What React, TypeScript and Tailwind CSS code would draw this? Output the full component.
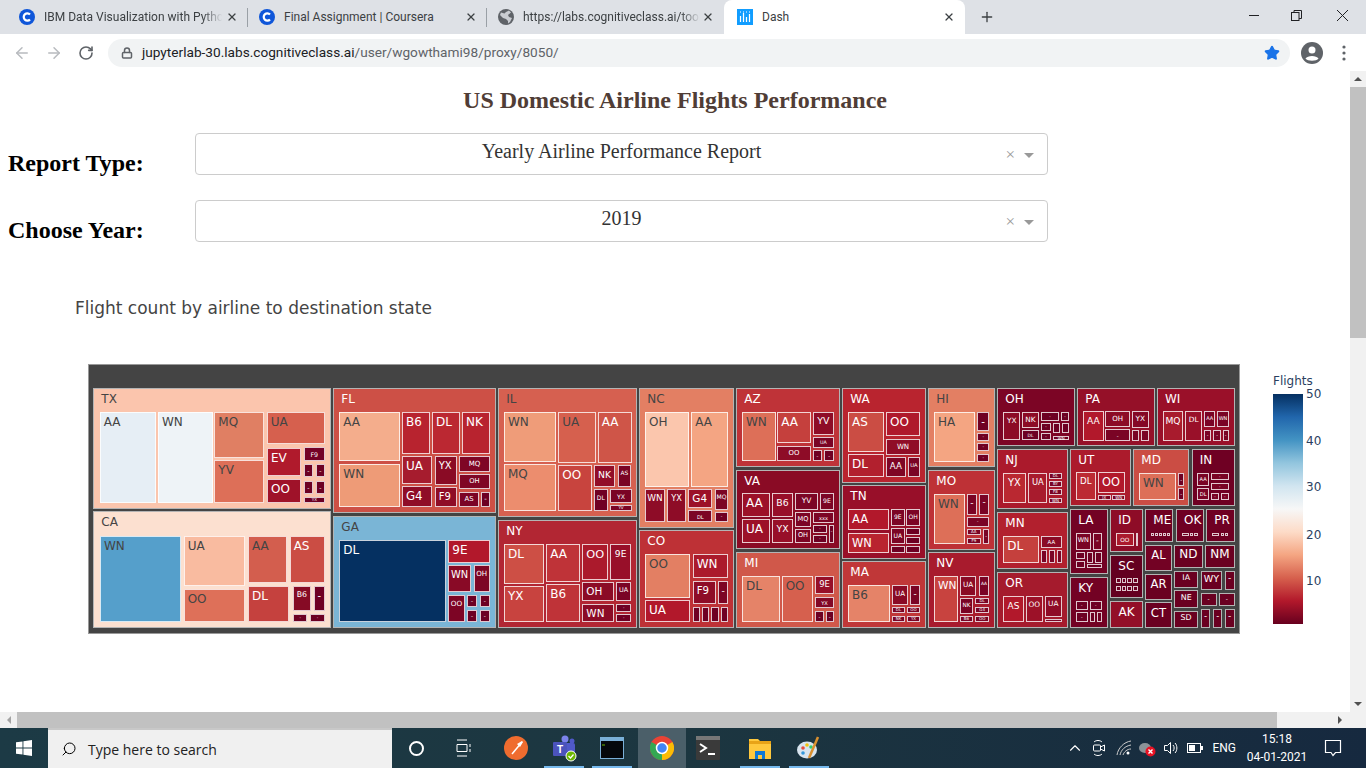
import React from "react";
import { ArrowLeft, ArrowRight, RotateCw, Lock, X, Plus, Star, ChevronUp, Search } from "lucide-react";

type N = [string, number, number, number, number, string, N[]?];
type G = { ox: number; oy: number; nodes: N[] };
const T = "#6d0023";
const M = "#7a0425";

const groups: G[] = [
  {
    ox: 85,
    oy: 360,
    nodes: [
      ["TX", 25, 84, 738, 446, "#fbc5ad", [
        ["AA", 44, 155, 213, 428, "#e6eef5"], ["WN", 219, 155, 383, 428, "#eef3f7"],
        ["MQ", 388, 155, 538, 293, "#e07f63"], ["YV", 388, 301, 538, 428, "#dd6f58"],
        ["UA", 545, 155, 719, 253, "#d6604e"], ["EV", 546, 263, 649, 349, "#b01a2c"],
        ["OO", 546, 356, 649, 428, "#9f1229"], ["F9", 656, 262, 720, 304, "#740227"],
        ["-", 656, 311, 684, 352, T], ["-", 692, 311, 720, 352, T], ["-", 656, 362, 684, 402, T],
        ["-", 692, 362, 720, 402, T], ["YX", 656, 410, 720, 428, T],
      ]],
      ["CA", 25, 453, 738, 805, "#fce0d0", [
        ["WN", 45, 527, 287, 786, "#559fcb"], ["UA", 296, 527, 481, 678, "#f9bba0"],
        ["OO", 296, 687, 481, 786, "#de7059"], ["AA", 489, 527, 606, 669, "#d35e4e"],
        ["AS", 614, 527, 719, 669, "#cb4d44"], ["DL", 489, 679, 613, 786, "#c5413e"],
        ["B6", 624, 679, 677, 752, "#860b25"], ["-", 686, 679, 719, 752, "#6f0023"],
        ["-", 624, 762, 667, 786, T], ["-", 676, 762, 719, 786, T],
      ]],
      ["FL", 745, 84, 1232, 460, "#cd5046", [
        ["AA", 763, 155, 945, 304, "#f4ad8c"], ["WN", 763, 312, 945, 442, "#ee9b77"],
        ["B6", 951, 155, 1034, 282, "#b8232f"], ["DL", 1041, 155, 1124, 282, "#bb2832"],
        ["NK", 1131, 155, 1214, 282, "#b8232f"], ["UA", 951, 289, 1041, 372, "#a61c2e"],
        ["YX", 1049, 289, 1117, 374, "#8a0b25"], ["MQ", 1123, 289, 1214, 336, "#7f0625"],
        ["OH", 1123, 343, 1214, 388, "#7f0625"], ["G4", 951, 379, 1041, 442, "#8f0d27"],
        ["F9", 1049, 381, 1117, 442, "#8f0d27"], ["AS", 1123, 396, 1181, 442, "#7b0426"],
        ["-", 1189, 396, 1214, 442, T],
      ]],
      ["GA", 745, 468, 1232, 805, "#7ab5d6", [
        ["DL", 763, 540, 1083, 787, "#053061"], ["9E", 1090, 540, 1214, 608, "#b2182b"],
        ["WN", 1090, 616, 1157, 697, "#890a26"], ["OH", 1166, 616, 1214, 697, "#7d0525"],
        ["OO", 1090, 705, 1139, 787, "#7d0525"], ["-", 1147, 705, 1175, 742, T],
        ["-", 1184, 705, 1214, 742, T], ["-", 1147, 750, 1175, 787, T], ["-", 1184, 750, 1214, 787, T],
      ]],
    ],
  },
  {
    ox: 495,
    oy: 380,
    nodes: [
      ["IL", 10, 24, 427, 410, "#d66050", [
        ["WN", 27, 95, 184, 246, "#ef9c79"], ["UA", 190, 95, 302, 248, "#d6604e"],
        ["AA", 308, 95, 410, 248, "#cf5548"], ["MQ", 27, 253, 184, 394, "#ec8d6e"],
        ["OO", 190, 256, 290, 394, "#c8443e"], ["NK", 297, 256, 360, 321, "#920e28"],
        ["AS", 368, 256, 408, 321, M], ["DL", 297, 328, 338, 394, "#6f0023"],
        ["YX", 346, 328, 410, 369, M], ["YV", 346, 376, 410, 394, M],
      ]],
      ["NY", 10, 421, 427, 744, "#b22633", [
        ["DL", 27, 491, 148, 611, "#cd4f45"], ["AA", 154, 491, 255, 605, "#bf3338"],
        ["YX", 27, 619, 148, 727, "#c8433f"], ["B6", 154, 613, 255, 727, "#bf3338"],
        ["OO", 262, 491, 339, 600, "#ab1a2c"], ["9E", 346, 491, 408, 600, "#980f29"],
        ["OH", 262, 607, 357, 663, "#8b0b26"], ["UA", 364, 607, 408, 663, M],
        ["WN", 262, 671, 357, 727, "#8b0b26"], ["-", 364, 671, 408, 695, "#6f0023"],
        ["-", 364, 703, 408, 727, "#6f0023"],
      ]],
      ["NC", 433, 24, 717, 443, "#e37f63", [
        ["OH", 450, 95, 583, 320, "#fbc6ad"], ["AA", 589, 95, 700, 320, "#f4a583"],
        ["WN", 450, 327, 510, 425, "#8e0c27"], ["YX", 517, 327, 573, 425, "#8e0c27"],
        ["G4", 580, 327, 652, 383, "#9c1128"], ["MQ", 659, 327, 700, 389, "#7c0525"],
        ["DL", 580, 391, 652, 425, "#7c0525"], ["-", 659, 396, 700, 425, "#6f0023"],
      ]],
      ["CO", 433, 451, 717, 744, "#be3136", [
        ["OO", 450, 523, 586, 653, "#e37f63"], ["WN", 593, 523, 700, 595, "#ab1a2c"],
        ["UA", 450, 661, 586, 727, "#b2182b"], ["F9", 593, 603, 662, 673, "#8e0c27"],
        ["-", 669, 603, 700, 673, "#7c0525"], ["", 593, 681, 615, 727, "#6f0023"],
        ["", 622, 681, 643, 727, "#6f0023"], ["", 649, 681, 672, 727, "#6f0023"],
        ["", 677, 681, 700, 727, "#6f0023"],
      ]],
      ["AZ", 724, 24, 1034, 262, "#bf3338", [
        ["WN", 741, 95, 842, 244, "#dd6f58"], ["AA", 847, 95, 947, 190, "#c5403d"],
        ["YV", 953, 95, 1017, 166, "#8e0c27"], ["OO", 847, 198, 947, 244, "#8e0c27"],
        ["UA", 953, 172, 1017, 204, M], ["-", 953, 210, 981, 244, "#6f0023"],
        ["-", 988, 210, 1017, 244, "#6f0023"],
      ]],
      ["VA", 724, 270, 1034, 507, "#8a0b25", [
        ["AA", 741, 340, 826, 412, "#9c1128"], ["B6", 831, 340, 894, 412, "#980f29"],
        ["UA", 741, 418, 826, 490, "#9c1128"], ["YX", 831, 418, 894, 490, "#980f29"],
        ["YV", 900, 340, 969, 390, "#7c0525"], ["9E", 975, 340, 1017, 390, "#7c0525"],
        ["MQ", 900, 396, 948, 440, "#7c0525"], ["xxx", 954, 396, 1017, 430, "#7c0525"],
        ["OH", 900, 446, 948, 490, "#7c0525"], ["-", 954, 436, 996, 460, T],
        ["-", 954, 466, 996, 490, T], ["-", 1002, 436, 1017, 490, T],
      ]],
      ["MI", 724, 516, 1034, 744, "#d0584a", [
        ["DL", 741, 587, 855, 727, "#e58368"], ["OO", 860, 587, 954, 727, "#d6604e"],
        ["9E", 960, 587, 1017, 642, "#960f28"], ["YX", 960, 650, 1017, 684, "#820826"],
        ["-", 960, 692, 986, 727, T], ["-", 992, 692, 1017, 727, T],
      ]],
    ],
  },
  {
    ox: 840,
    oy: 380,
    nodes: [
      ["WA", 7, 24, 257, 308, "#b9242f", [
        ["AS", 24, 95, 132, 215, "#cb4d44"], ["OO", 138, 95, 240, 169, "#af192c"],
        ["WN", 138, 177, 240, 224, "#900d27"], ["DL", 24, 223, 132, 291, "#b2202e"],
        ["AA", 138, 232, 197, 291, "#7f0625"], ["UA", 204, 232, 240, 291, M],
      ]],
      ["TN", 7, 316, 257, 536, "#980f29", [
        ["AA", 24, 388, 146, 450, "#b2182b"], ["WN", 24, 458, 146, 519, "#b9242f"],
        ["9E", 153, 388, 194, 437, "#7c0525"], ["OH", 199, 388, 240, 437, "#7c0525"],
        ["UA", 153, 444, 194, 491, "#7c0525"], ["", 199, 444, 240, 465, T],
        ["", 199, 471, 240, 491, T], ["", 153, 498, 194, 519, T], ["", 199, 498, 240, 519, T],
      ]],
      ["MA", 7, 544, 257, 744, "#c03738", [
        ["B6", 24, 616, 150, 727, "#e58368"], ["UA", 156, 616, 204, 674, "#890a26"],
        ["-", 210, 616, 240, 674, M], ["DL", 156, 682, 195, 700, M], ["OO", 201, 682, 240, 700, M],
        ["NK", 156, 708, 195, 727, M], ["YX", 201, 708, 240, 727, M],
      ]],
      ["HI", 265, 24, 465, 262, "#e37f63", [
        ["HA", 282, 95, 406, 245, "#f4a582"], ["-", 412, 95, 447, 152, "#6f0023"],
        ["-", 412, 158, 447, 182, "#6f0023"], ["-", 412, 190, 447, 214, "#6f0023"],
        ["-", 412, 222, 447, 245, "#6f0023"],
      ]],
      ["MO", 265, 270, 465, 509, "#be3136", [
        ["WN", 282, 342, 374, 491, "#dd6f58"], ["-", 380, 342, 411, 404, M],
        ["-", 417, 342, 447, 404, M], ["-", 380, 412, 447, 440, M], ["AA", 380, 447, 423, 466, M],
        ["F9", 380, 473, 423, 491, M], ["-", 430, 447, 447, 491, M],
      ]],
      ["NV", 265, 517, 465, 744, "#a81b2d", [
        ["WN", 282, 589, 354, 727, "#c8433f"], ["UA", 360, 589, 409, 647, "#8a0b25"],
        ["AA", 417, 589, 447, 647, M], ["NK", 360, 655, 399, 702, M], ["DL", 406, 655, 447, 673, M],
        ["G4", 406, 682, 447, 700, M], ["B6", 360, 708, 399, 727, M], ["OO", 406, 708, 447, 727, M],
      ]],
      ["OH", 472, 24, 704, 198, "#7c0525", [
        ["YX", 490, 95, 540, 181, "#8c0b26"], ["NK", 546, 95, 597, 144, "#8c0b26"],
        ["-", 603, 95, 657, 122, T], ["-", 663, 95, 687, 122, T], ["DL", 546, 151, 597, 181, T],
        ["-", 603, 130, 633, 153, T], ["", 640, 130, 660, 160, T], ["", 667, 130, 687, 160, T],
        ["-", 603, 160, 633, 181, T], ["WN", 640, 168, 687, 181, T],
      ]],
      ["NJ", 472, 207, 683, 388, "#ab1a2c", [
        ["YX", 490, 279, 557, 370, "#ba2831"], ["UA", 565, 279, 622, 370, "#a81b2d"],
        ["DL", 628, 279, 665, 296, M], ["BY", 628, 303, 665, 321, M], ["F8", 628, 328, 665, 346, M],
        ["WN", 628, 353, 665, 370, M],
      ]],
      ["MN", 472, 397, 683, 566, "#b2202e", [
        ["DL", 490, 468, 597, 548, "#c5403d"], ["AA", 603, 468, 665, 504, "#8a0b25"],
        ["", 603, 511, 622, 548, M], ["", 628, 511, 644, 548, M], ["", 650, 511, 665, 548, M],
      ]],
      ["OR", 472, 575, 683, 744, "#a51b2d", [
        ["AS", 490, 647, 551, 727, "#b2182b"], ["OO", 558, 647, 608, 727, "#9c1128"],
        ["UA", 615, 647, 665, 710, "#8e0c27"], ["", 615, 717, 665, 727, M],
      ]],
    ],
  },
  {
    ox: 1065,
    oy: 370,
    nodes: [
      ["PA", 37, 54, 269, 229, "#951028", [
        ["AA", 54, 124, 116, 212, "#b2182b"], ["OH", 121, 124, 195, 171, "#8c0b26"],
        ["YX", 201, 124, 251, 175, "#850826"], ["-", 121, 178, 195, 212, M],
        ["", 201, 180, 222, 212, M], ["", 229, 180, 251, 212, M],
      ]],
      ["WI", 276, 54, 509, 229, "#9a1029", [
        ["MQ", 293, 124, 355, 212, "#a81b2d"], ["DL", 361, 124, 411, 212, "#991029"],
        ["AA", 417, 124, 451, 170, M], ["WN", 457, 124, 491, 170, M], ["-", 417, 180, 438, 212, M],
        ["-", 445, 180, 468, 212, M], ["-", 473, 180, 491, 212, M],
      ]],
      ["UT", 16, 238, 197, 409, "#ac1b2c", [
        ["DL", 33, 307, 92, 391, "#bc2a33"], ["OO", 99, 307, 180, 368, "#b2182b"],
        ["JX", 99, 375, 137, 391, M], ["WN", 142, 375, 180, 391, M],
      ]],
      ["MD", 205, 238, 372, 409, "#cb4d44", [
        ["WN", 222, 309, 333, 391, "#dd6f58"], ["-", 340, 309, 358, 347, T], ["-", 340, 353, 358, 391, T],
      ]],
      ["IN", 380, 238, 509, 409, "#6f0023", [
        ["AA", 397, 308, 432, 347, M], ["-", 438, 308, 491, 331, M], ["-", 438, 338, 491, 361, M],
        ["DL", 397, 353, 432, 391, M], ["-", 438, 368, 462, 391, M], ["-", 468, 368, 491, 391, M],
      ]],
      ["LA", 16, 418, 128, 612, "#730224", [
        ["WN", 33, 489, 77, 540, "#7a0425"], ["-", 84, 489, 110, 540, "#7a0425"],
        ["", 33, 546, 60, 566, T], ["", 33, 573, 60, 595, T], ["", 67, 546, 84, 578, T],
        ["", 90, 546, 110, 578, T], ["", 67, 583, 110, 595, T],
      ]],
      ["ID", 136, 418, 234, 545, "#8e0c27", [
        ["OO", 153, 489, 206, 528, "#ab1a2c"], ["", 212, 489, 217, 528, "#7a0425"],
      ]],
      ["ME", 241, 418, 325, 515, "#6f0023", [
        ["", 258, 488, 267, 497, T], ["", 270, 488, 279, 497, T], ["", 282, 488, 291, 497, T],
        ["", 294, 488, 303, 497, T], ["", 306, 488, 316, 497, T],
      ]],
      ["OK", 333, 418, 416, 515, "#6f0023", [
        ["", 350, 488, 372, 497, T], ["", 376, 488, 385, 497, T], ["", 388, 488, 398, 497, T],
      ]],
      ["PR", 424, 418, 509, 515, "#6f0023", [
        ["", 441, 488, 463, 497, T], ["", 467, 488, 476, 497, T], ["", 479, 488, 490, 497, T],
      ]],
      ["SC", 136, 554, 234, 684, "#640020", [
        ["", 153, 625, 167, 640, T], ["", 170, 625, 184, 640, T], ["", 187, 625, 201, 640, T],
        ["", 204, 625, 218, 640, T], ["", 153, 649, 167, 664, T], ["", 170, 649, 184, 664, T],
        ["", 187, 649, 201, 664, T], ["", 204, 649, 218, 664, T],
      ]],
      ["AL", 241, 524, 320, 602, "#730224"],
      ["ND", 327, 524, 413, 593, "#6a0021"],
      ["NM", 421, 524, 509, 593, "#6a0021"],
      ["AR", 241, 611, 320, 689, "#6a0021"],
      ["IA", 327, 602, 400, 654, "#6a0021"],
      ["WY", 407, 602, 472, 661, "#6a0021"],
      ["-", 479, 602, 509, 661, "#6a0021"],
      ["NE", 327, 661, 400, 714, "#6a0021"],
      ["-", 407, 669, 455, 708, "#6a0021"],
      ["-", 462, 669, 509, 708, "#6a0021"],
      ["AK", 136, 692, 234, 775, "#930f28"],
      ["CT", 241, 697, 320, 775, "#6a0021"],
      ["SD", 327, 722, 400, 775, "#6a0021"],
      ["-", 407, 716, 436, 775, "#6a0021"],
      ["-", 444, 716, 472, 775, "#6a0021"],
      ["-", 479, 716, 509, 775, "#6a0021"],
      ["KY", 16, 620, 128, 775, "#730224", [
        ["-", 33, 692, 68, 720, T], ["-", 75, 692, 110, 720, T], ["-", 33, 727, 68, 757, T],
        ["", 75, 727, 90, 757, T], ["", 96, 727, 110, 757, T],
      ]],
    ],
  },
];

const PLOT_X = 88;
const PLOT_Y = 364;

function isLight(hex: string) {
  const r = parseInt(hex.slice(1, 3), 16);
  const g = parseInt(hex.slice(3, 5), 16);
  const b = parseInt(hex.slice(5, 7), 16);
  return r * 0.299 + g * 0.587 + b * 0.114 > 125;
}

function labelSize(label: string, w: number, h: number) {
  const hf = h < 18 ? 0.45 : 0.56;
  return Math.max(4, Math.min(12, (w * 0.62) / (Math.max(label.length, 1) * 0.7), h * hf));
}

function Tree() {
  const out: React.ReactNode[] = [];
  groups.forEach((g, gi) => {
    const px = (v: number) => g.ox + v / 3 - PLOT_X;
    const py = (v: number) => g.oy + v / 3 - PLOT_Y;
    g.nodes.forEach((n, ni) => {
      const [label, x0, y0, x1, y1, color, kids] = n;
      const w = (x1 - x0) / 3;
      const h = (y1 - y0) / 3;
      const isLeaf = !kids;
      const size = isLeaf ? labelSize(label, w, h) : 12;
      const line = size + 3;
      out.push(
        <div
          key={`${gi}-${ni}`}
          className="absolute box-border border border-[#b4b4b4] font-['DejaVu_Sans',sans-serif] whitespace-nowrap"
          style={{
            left: px(x0),
            top: py(y0),
            width: w,
            height: h,
            background: color,
            color: isLight(color) ? "#444444" : "#ffffff",
            fontSize: size,
            lineHeight: `${line}px`,
            paddingLeft: isLeaf ? 0 : 7,
            paddingTop: isLeaf ? Math.max(0, h * 0.38 - line / 2) : 3,
            textAlign: isLeaf ? "center" : "left",
          }}
        >
          {label}
        </div>
      );
      (kids || []).forEach((k, ki) => {
        const [kl, a0, b0, a1, b1, kc] = k;
        const kw = (a1 - a0) / 3;
        const kh = (b1 - b0) / 3;
        const ks = labelSize(kl, kw, kh);
        const ksmall = ks < 10;
        const kline = Math.min(ks + 3, Math.max(kh - 2, ks));
        out.push(
          <div
            key={`${gi}-${ni}-${ki}`}
            className="absolute box-border border border-[#ffffffc8] font-['DejaVu_Sans',sans-serif] whitespace-nowrap"
            style={{
              left: px(a0),
              top: py(b0),
              width: kw,
              height: kh,
              background: kc,
              color: isLight(kc) ? "#444444" : "#ffffff",
              fontSize: ks,
              lineHeight: `${kline}px`,
              paddingLeft: ksmall ? 0 : 3,
              paddingTop: ksmall ? Math.max(0, Math.min(3, kh * 0.12, kh - 2 - kline)) : 2,
              textAlign: ksmall ? "center" : "left",
            }}
          >
            {kl}
          </div>
        );
      });
    });
  });
  return <>{out}</>;
}

function CourseraIcon() {
  return (
    <svg width="16" height="16" viewBox="0 0 16 16" className="shrink-0">
      <circle cx="8" cy="8" r="8" fill="#0f56d9" />
      <path d="M11 5.600A3.600 3.600 0 1 0 11 10.400" fill="none" stroke="#fff" strokeWidth="2.200" />
    </svg>
  );
}

function GlobeIcon() {
  return (
    <svg width="16" height="16" viewBox="0 0 16 16" className="shrink-0">
      <circle cx="8" cy="8" r="8" fill="#5f6368" />
      <path d="M3 3.500 6.500 4.500 8 3l3-1.500 2 2L10 6l1 2 3 1-2 4-2 1.500V12L8 10 5 9 2 6z" fill="#c9ccd1" />
    </svg>
  );
}

function DashIcon() {
  return (
    <svg width="16" height="16" viewBox="0 0 16 16" className="shrink-0">
      <rect width="16" height="16" fill="#119dff" />
      <path d="M3.500 7v6M6.500 4v9M9.500 8v5M12.500 5v8" stroke="#fff" strokeWidth="1.200" />
      <path d="M3 3h10" stroke="#fff" strokeWidth="1" strokeDasharray="1 2" />
    </svg>
  );
}

function Tab({ icon, title, w, ml, active, sep, fade }: { icon: React.ReactNode; title: string; w: number; ml: number; active?: boolean; sep?: boolean; fade?: boolean }) {
  return (
    <div
      className={`relative flex h-[34px] items-center shrink-0 ${active ? "bg-white rounded-t-lg" : ""}`}
      style={{ width: w }}
    >
      <span style={{ marginLeft: ml }}>{icon}</span>
      <span className={`ml-[9px] whitespace-nowrap text-[12px] text-[#3c4043] font-['Roboto',sans-serif] ${fade ? "[mask-image:linear-gradient(to_right,black_88%,transparent_99%)]" : ""}`}>{title}</span>
      <X className="absolute right-[10px] top-[11px] text-[#3c4043]" size={12} strokeWidth={2.4} />
      {sep && <span className="absolute right-0 top-[8px] h-[19px] w-px bg-[#9aa0a6]" />}
    </div>
  );
}

function Select({ value }: { value: string }) {
  return (
    <div className="relative flex h-[42px] w-[853px] items-center justify-center rounded border border-[#ccc] bg-white pb-[7px] text-[20px] text-[#333] font-['Liberation_Serif',serif]">
      {value}
      <span className="absolute right-[32px] top-[11px] text-[17px] leading-5 text-[#999]">×</span>
      <span className="absolute right-[13px] top-[19px] h-0 w-0 border-x-[5px] border-t-[5px] border-x-transparent border-t-[#999]" />
    </div>
  );
}

function Tray() {
  return (
    <div className="ml-auto flex h-full items-center text-white">
      <ChevronUp size={18} strokeWidth={1.5} className="mr-[8px]" />
      <svg width="14" height="18" viewBox="0 0 14 18" className="mr-[10px]" fill="none" stroke="#fff">
        <path d="M2 3C4 1 8 1 10 3M2 15c2 2 6 2 8 0" />
        <rect x="1.500" y="6" width="7" height="6" rx="1" />
        <path d="m8.500 8 4-2v6l-4-2" />
      </svg>
      <svg width="16" height="16" viewBox="0 0 16 16" className="mr-[6px]" fill="none" stroke="#ccc" strokeWidth="1">
        <path d="M1 15C2 8 8 2 15 1M4 15C5 10 9 6 15 5M7 15c1-3 4-6 8-6" />
        <circle cx="12" cy="13" r="1.500" fill="#fff" stroke="none" />
      </svg>
      <svg width="18" height="18" viewBox="0 0 18 18" className="mr-[7px]">
        <ellipse cx="7" cy="9" rx="6" ry="5" fill="#8b9398" />
        <circle cx="12.500" cy="12.500" r="5" fill="#e81123" />
        <path d="m10.500 10.500 4 4m0-4-4 4" stroke="#fff" strokeWidth="1.400" />
      </svg>
      <svg width="16" height="16" viewBox="0 0 16 16" className="mr-[8px]" fill="none" stroke="#fff">
        <path d="M1.500 5.500h3l3-3v11l-3-3h-3zM10 5c1.500 1.500 1.500 4.500 0 6M12 3c2.500 2.500 2.500 7.500 0 10" />
      </svg>
      <svg width="16" height="10" viewBox="0 0 16 10" className="mr-[9px]">
        <rect x=".5" y=".5" width="13" height="9" fill="none" stroke="#fff" />
        <rect x="2" y="2" width="6" height="6" fill="#fff" />
        <rect x="14" y="3" width="2" height="4" fill="#fff" />
      </svg>
      <span className="mr-[10px] text-[12px] font-['Roboto',sans-serif]">ENG</span>
      <div className="mr-[16px] flex w-[62px] flex-col items-center whitespace-nowrap text-[12px] leading-[18px] font-['Roboto',sans-serif]">
        <span>15:18</span>
        <span>04-01-2021</span>
      </div>
      <svg width="18" height="18" viewBox="0 0 18 18" className="mr-[24px]" fill="none" stroke="#fff" strokeWidth="1.200">
        <path d="M1.500 1.500h15v12h-5L9 16.500 7 13.500H1.500z" />
      </svg>
    </div>
  );
}

function TaskIcon({ w, active, under, children }: { w: number; active?: boolean; under?: boolean; children: React.ReactNode }) {
  return (
    <div className={`relative flex h-full items-center justify-center shrink-0 ${active ? "bg-[#4b5f69]" : ""}`} style={{ width: w }}>
      {children}
      {under && <span className="absolute bottom-0 left-0 right-0 h-[2px] bg-[#76b9ed]" />}
    </div>
  );
}

export default function App() {
  return (
    <div className="flex h-[768px] w-[1366px] flex-col overflow-hidden bg-white">
      {/* tab strip */}
      <div className="relative flex h-[34px] shrink-0 items-center bg-[#dee1e6]">
        <Tab icon={<CourseraIcon />} title="IBM Data Visualization with Pytho" w={248} ml={19} sep fade />
        <Tab icon={<CourseraIcon />} title="Final Assignment | Coursera" w={239} ml={11} sep />
        <Tab icon={<GlobeIcon />} title="https://labs.cognitiveclass.ai/tool" w={237} ml={11} fade />
        <Tab icon={<DashIcon />} title="Dash" w={241} ml={13} active />
        <Plus size={16} strokeWidth={2} className="ml-[14px] text-[#3c4043]" />
        <div className="ml-auto mr-[17px] flex items-center gap-[31px] pb-[4px] text-[#202124]">
          <span className="h-px w-[10px] bg-[#202124]" />
          <svg width="13" height="13" viewBox="0 0 13 13" fill="none" stroke="#202124">
            <rect x="1.500" y="3.500" width="7.500" height="8" />
            <path d="M4 3V1.500h7.500v8H9" />
          </svg>
          <svg width="13" height="13" viewBox="0 0 13 13" stroke="#202124" className="ml-[2px]">
            <path d="m1 1 11 11M12 1 1 12" />
          </svg>
        </div>
      </div>
      {/* toolbar */}
      <div className="flex h-[37px] shrink-0 items-center bg-white pb-[4px] pt-[4px]">
        <ArrowLeft size={18} className="ml-[13px] text-[#b8bbbf]" strokeWidth={2} />
        <ArrowRight size={18} className="ml-[14px] text-[#b8bbbf]" strokeWidth={2} />
        <RotateCw size={16} className="ml-[15px] text-[#5f6368]" strokeWidth={2.4} />
        <div className="ml-[14px] flex h-[28px] w-[1182px] items-center rounded-full bg-[#f1f3f4] pl-[13px] text-[13.65px] font-['Roboto',sans-serif]">
          <Lock size={12} strokeWidth={3} className="text-[#5f6368]" />
          <span className="ml-[9px] text-[#202124]">jupyterlab-30.labs.cognitiveclass.ai</span>
          <span className="text-[#5f6368]">/user/wgowthami98/proxy/8050/</span>
          <Star size={16} className="ml-auto mr-[10px] text-[#1a73e8]" fill="#1a73e8" />
        </div>
        <svg width="22" height="22" viewBox="0 0 22 22" className="ml-[11px]">
          <circle cx="11" cy="11" r="11" fill="#5f6368" />
          <circle cx="11" cy="8" r="3.500" fill="#fff" />
          <path d="M4.500 16.500c2-3.500 11-3.500 13 0-2 3-11 3-13 0z" fill="#fff" />
        </svg>
        <svg width="4" height="16" viewBox="0 0 4 16" className="ml-[19px]" fill="#5f6368">
          <circle cx="2" cy="2" r="1.600" />
          <circle cx="2" cy="8" r="1.600" />
          <circle cx="2" cy="14" r="1.600" />
        </svg>
      </div>
      {/* page + vertical scrollbar */}
      <div className="flex h-[641px] shrink-0">
        <div className="w-[1350px] overflow-hidden">
          <h1 className="flex h-[58px] items-center justify-center text-[24px] font-bold text-[#503D36] font-['Liberation_Serif',serif]">
            US Domestic Airline Flights Performance
          </h1>
          <div className="mt-[4px] flex">
            <div className="mt-[16px] w-[195px] pl-[8px] text-[24px] font-bold leading-7 text-black font-['Liberation_Serif',serif]">Report Type:</div>
            <Select value="Yearly Airline Performance Report" />
          </div>
          <div className="mt-[23px] flex">
            <div className="mt-[16px] w-[195px] pl-[8px] text-[24px] font-bold leading-7 text-black font-['Liberation_Serif',serif]">Choose Year:</div>
            <Select value="2019" />
          </div>
          <div className="ml-[75px] mt-[52px] text-[17px] leading-6 text-[#444] font-['DejaVu_Sans',sans-serif]">
            Flight count by airline to destination state
          </div>
          <div className="ml-[88px] mt-[44px] flex">
            <div className="relative h-[270px] w-[1152px] shrink-0 border border-[#999] bg-[#444]">
              <div className="absolute -left-px -top-px">
                <Tree />
              </div>
            </div>
            <div className="relative ml-[33px] h-[270px] w-[70px] font-['DejaVu_Sans',sans-serif] text-[12px] text-[#2a3f5f]">
              <div className="mt-[9px] leading-4">Flights</div>
              <div className="mt-[5px] h-[230px] w-[30px] bg-[linear-gradient(to_top,#67001f,#b2182b_10%,#d6604d_20%,#f4a582_30%,#fddbc7_40%,#f7f7f7_50%,#d1e5f0_60%,#92c5de_70%,#4393c3_80%,#2166ac_90%,#053061)]" />
              {[["50", 22], ["40", 69], ["30", 115], ["20", 163], ["10", 209]].map(([t, y]) => (
                <span key={t} className="absolute left-[33px] leading-4" style={{ top: y as number }}>{t}</span>
              ))}
            </div>
          </div>
        </div>
        <div className="flex w-[16px] shrink-0 flex-col bg-[#f1f1f1]">
          <div className="flex h-[16px] items-center justify-center">
            <span className="h-0 w-0 border-x-[4px] border-b-[4px] border-x-transparent border-b-[#505050]" />
          </div>
          <div className="h-[251px] bg-[#c1c1c1]" />
          <div className="mt-auto flex h-[16px] items-center justify-center">
            <span className="h-0 w-0 border-x-[4px] border-t-[4px] border-x-transparent border-t-[#505050]" />
          </div>
        </div>
      </div>
      {/* horizontal scrollbar */}
      <div className="flex h-[16px] shrink-0 items-center bg-[#f1f1f1]">
        <div className="flex w-[17px] justify-center">
          <span className="h-0 w-0 border-y-[4px] border-r-[4px] border-y-transparent border-r-[#a3a3a3]" />
        </div>
        <div className="h-full w-[1260px] bg-[#c1c1c1]" />
        <div className="ml-auto mr-[24px] flex justify-center">
          <span className="h-0 w-0 border-y-[4px] border-l-[4px] border-y-transparent border-l-[#505050]" />
        </div>
      </div>
      {/* taskbar */}
      <div className="flex h-[40px] shrink-0 items-center bg-[linear-gradient(to_right,#1c3a45,#1c3640_50%,#16293f)]">
        <div className="flex h-full w-[48px] items-center justify-center">
          <svg width="16" height="16" viewBox="0 0 16 16" fill="#fff">
            <path d="M0 2.300 6.500 1.400v6.100H0zM7.400 1.300 16 0v7.500H7.400zM0 8.400h6.500v6.200L0 13.700zM7.400 8.400H16V16l-8.600-1.200z" />
          </svg>
        </div>
        <div className="flex h-full w-[344px] items-center border-t-2 border-t-[#c8c8c8] bg-[#f0f0f0] pl-[13px] text-[14px] text-[#222] font-['Open_Sans',sans-serif]">
          <Search size={16} strokeWidth={1.500} className="-scale-x-100 text-black" />
          <span className="ml-[11px]">Type here to search</span>
        </div>
        <div className="flex h-full items-center">
          <TaskIcon w={48}>
            <span className="h-[15px] w-[15px] rounded-full border-2 border-white" />
          </TaskIcon>
          <TaskIcon w={47}>
            <svg width="16" height="18" viewBox="0 0 16 18" fill="none" stroke="#fff">
              <path d="M1 1h10M1 17h10M1 5.500h10v7H1zM14 5v3M14 10v3" />
            </svg>
          </TaskIcon>
          <TaskIcon w={57}>
            <svg width="24" height="24" viewBox="0 0 24 24">
              <circle cx="12" cy="12" r="12" fill="#ef6c2f" />
              <path d="M8 18 18 6" stroke="#fff" strokeWidth="1.500" />
              <path d="m13 8 5-3 1 1-3 5z" fill="#fff" />
            </svg>
          </TaskIcon>
          <TaskIcon w={40} under>
            <svg width="26" height="28" viewBox="0 0 26 28">
              <circle cx="14" cy="5" r="3.500" fill="#7b83eb" />
              <circle cx="21" cy="7" r="2.500" fill="#5059c9" />
              <rect x="12" y="9" width="12" height="12" rx="2" fill="#5059c9" />
              <rect x="2" y="8" width="14" height="14" rx="1" fill="#4b53bc" />
              <text x="9" y="19" textAnchor="middle" fontSize="10" fontWeight="700" fill="#fff" fontFamily="Liberation Sans">T</text>
              <circle cx="20" cy="22" r="5" fill="#6bb700" stroke="#fff" />
              <path d="m17.500 22 2 2 3-3.500" stroke="#fff" fill="none" strokeWidth="1.200" />
            </svg>
          </TaskIcon>
          <span className="w-[8px] shrink-0" />
          <TaskIcon w={40} under>
            <svg width="24" height="22" viewBox="0 0 24 22">
              <rect width="24" height="22" fill="#7ab0d8" />
              <rect x="1" y="4" width="22" height="17" fill="#05080c" />
              <path d="M2 8h3" stroke="#6bb700" />
            </svg>
          </TaskIcon>
          <span className="w-[6px] shrink-0" />
          <TaskIcon w={48} active>
            <svg width="24" height="24" viewBox="0 0 24 24">
              <circle cx="12" cy="12" r="12" fill="#ea4335" />
              <path d="M12 12 1.600 6A12 12 0 0 0 12 24z" fill="#34a853" />
              <path d="M12 12V24A12 12 0 0 0 22.400 6z" fill="#fbbc05" />
              <circle cx="12" cy="12" r="5.500" fill="#4285f4" stroke="#fff" strokeWidth="1.500" />
            </svg>
          </TaskIcon>
          <TaskIcon w={44}>
            <svg width="24" height="24" viewBox="0 0 24 24">
              <rect width="24" height="24" rx="1" fill="#3a3a3a" />
              <rect width="24" height="4" fill="#777" />
              <path d="m4 8 6 4-6 4" stroke="#fff" fill="none" strokeWidth="2" />
              <path d="M12 18h7" stroke="#fff" strokeWidth="2" />
            </svg>
          </TaskIcon>
          <span className="w-[10px] shrink-0" />
          <TaskIcon w={40} under>
            <svg width="22" height="22" viewBox="0 0 22 22">
              <path d="M0 2h9l2 2h11v18H0z" fill="#ffc83d" />
              <rect y="4" width="22" height="3" fill="#e8a317" />
              <path d="M6 22v-8h10v8h-3v-4H9v4z" fill="#0f78d4" />
            </svg>
          </TaskIcon>
          <span className="w-[9px] shrink-0" />
          <TaskIcon w={40} under>
            <svg width="26" height="26" viewBox="0 0 26 26">
              <ellipse cx="11" cy="15" rx="10" ry="8.500" fill="#d8e4ee" />
              <circle cx="7" cy="13" r="1.800" fill="#e84c3d" />
              <circle cx="11" cy="10" r="1.800" fill="#f1c40f" />
              <circle cx="15" cy="12" r="1.800" fill="#2ecc71" />
              <circle cx="7" cy="18" r="1.800" fill="#3498db" />
              <path d="M13 23 22 2" stroke="#d9902f" strokeWidth="2.500" />
            </svg>
          </TaskIcon>
        </div>
        <Tray />
      </div>
    </div>
  );
}
